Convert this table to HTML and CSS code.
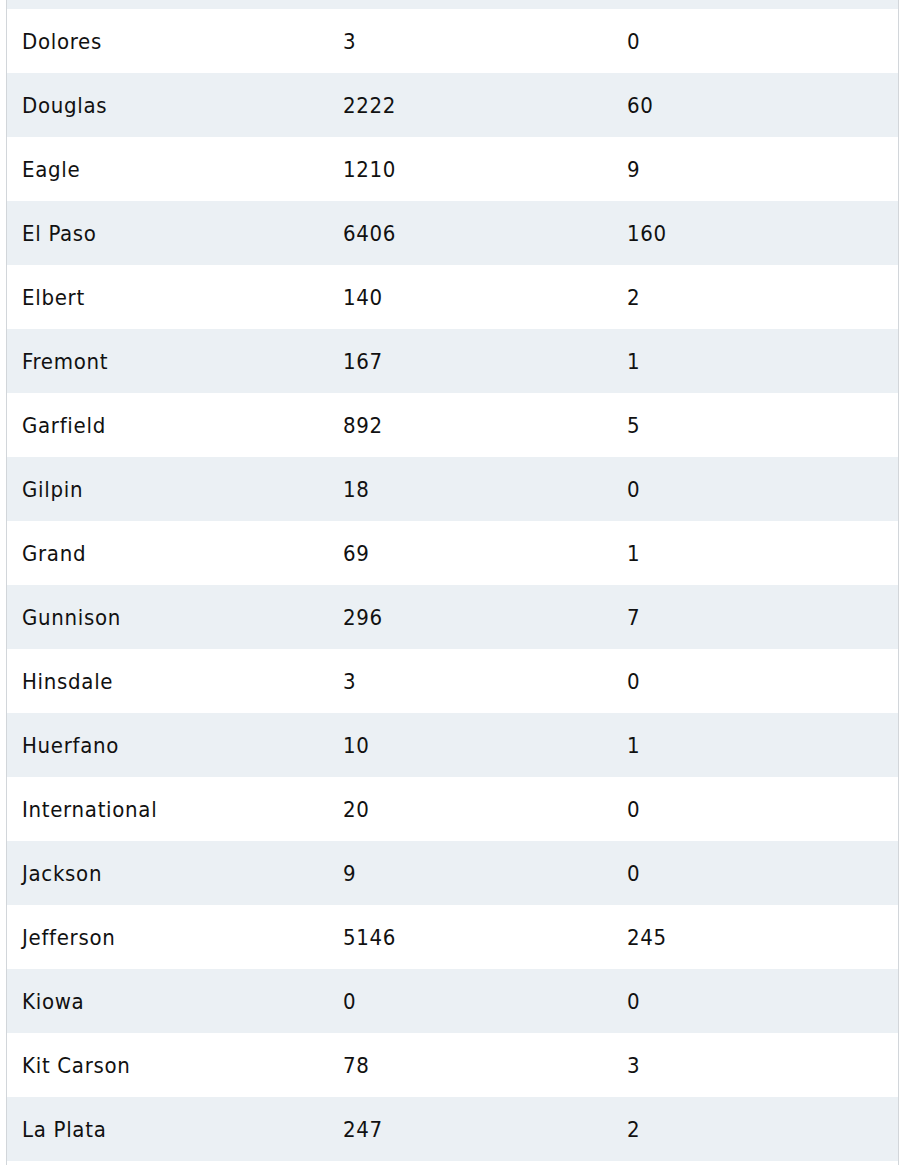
FILE: index.html
```html
<!DOCTYPE html>
<html>
<head>
<meta charset="utf-8">
<link rel="stylesheet" href="styles.css">
</head>
<body>
<div class="frame">
<table class="data">
<colgroup><col class="c1"><col class="c2"><col class="c3"></colgroup>
<tbody>
<tr class="stub"><td></td><td></td><td></td></tr>
<tr><td>Dolores</td><td>3</td><td>0</td></tr>
<tr><td>Douglas</td><td>2222</td><td>60</td></tr>
<tr><td>Eagle</td><td>1210</td><td>9</td></tr>
<tr><td>El Paso</td><td>6406</td><td>160</td></tr>
<tr><td>Elbert</td><td>140</td><td>2</td></tr>
<tr><td>Fremont</td><td>167</td><td>1</td></tr>
<tr><td>Garfield</td><td>892</td><td>5</td></tr>
<tr><td>Gilpin</td><td>18</td><td>0</td></tr>
<tr><td>Grand</td><td>69</td><td>1</td></tr>
<tr><td>Gunnison</td><td>296</td><td>7</td></tr>
<tr><td>Hinsdale</td><td>3</td><td>0</td></tr>
<tr><td>Huerfano</td><td>10</td><td>1</td></tr>
<tr><td>International</td><td>20</td><td>0</td></tr>
<tr><td>Jackson</td><td>9</td><td>0</td></tr>
<tr><td>Jefferson</td><td>5146</td><td>245</td></tr>
<tr><td>Kiowa</td><td>0</td><td>0</td></tr>
<tr><td>Kit Carson</td><td>78</td><td>3</td></tr>
<tr><td>La Plata</td><td>247</td><td>2</td></tr>
</tbody>
</table>
</div>
</body>
</html>
```
FILE: styles.css
```css
html, body {
  margin: 0;
  padding: 0;
  background: #ffffff;
  overflow: hidden;
}
.frame {
  margin-left: 6px;
  width: 891px;
  border-left: 1px solid #d2d6da;
  border-right: 1px solid #d2d6da;
  height: 1165px;
  overflow: hidden;
}
.data {
  width: 891px;
  border-collapse: collapse;
  table-layout: fixed;
  font-family: "DejaVu Sans Condensed", "DejaVu Sans", sans-serif;
  font-stretch: condensed;
  font-size: 22px;
  letter-spacing: 0.7px;
  color: #111111;
}
.c1 { width: 321px; }
.c2 { width: 284px; }
.c3 { width: 286px; }
.data td {
  height: 64px;
  padding: 2px 15px 0;
  box-sizing: border-box;
  line-height: 24px;
  vertical-align: middle;
}
.data tr.stub td {
  height: 9px;
  padding: 0;
  line-height: 0;
}
.data tr:nth-child(odd) td {
  background: #ebf0f4;
}
```
